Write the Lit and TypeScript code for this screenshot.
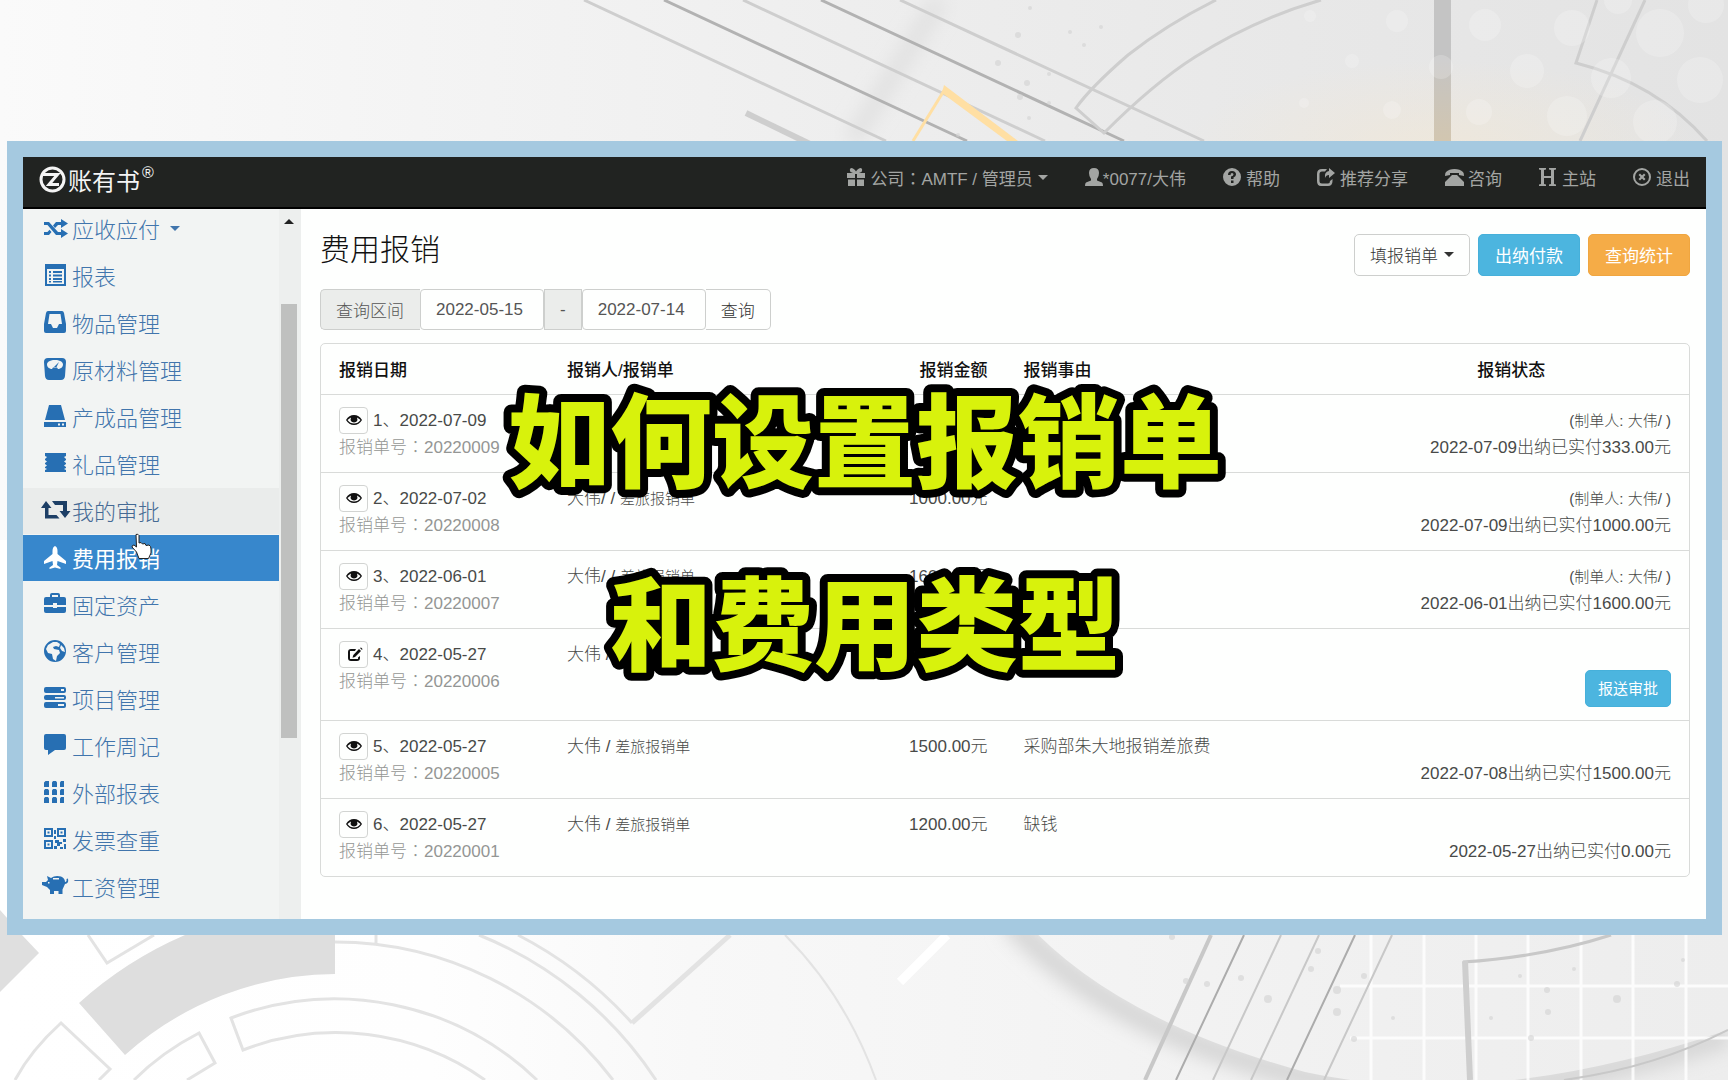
import { LitElement, html, css, svg, nothing } from "lit";
import { customElement, property } from "lit/decorators.js";
import { classMap } from "lit/directives/class-map.js";

const icons: Record<string, unknown> = {
  random: svg`<path d="M0 5h5l9 10h3v-3l7 4.500-7 4.500v-3h-5L3.500 8H0zM0 18h5l2.500-3-2-2.200L3.500 15H0zM9 8.500 12 5h5V2l7 4.500L17 11V8h-3l-3 3z"/>`,
  listalt: svg`<path fill-rule="evenodd" d="M1 0h21v22H1zm2 5v15h17V5z"/><path d="M5 7h2v2H5zm4 0h9v2H9zM5 10.500h2v2H5zm4 0h9v2H9zM5 14h2v2H5zm4 0h9v2H9zM5 17h2v1.500H5zm4 0h9v1.500H9z"/>`,
  inbox: svg`<path fill-rule="evenodd" d="M4 0h14q1.500 0 2 2l2 11v7q0 2-2 2H2q-2 0-2-2v-7L2 2q.5-2 2-2zm1.500 3L4 13h3l2 4h4l2-4h3l-1.500-10z"/>`,
  scale: svg`<path fill-rule="evenodd" d="M4 0h14q4 0 4 4l-1 14q-.5 4-4 4H5q-3.500 0-4-4L0 4q0-4 4-4zm7 2C5 2 3 4.500 3 6.500c0 3 3 4.500 5 4.500l1-1.500h4l1 1.500c2 0 5-1.500 5-4.500C19 4.500 17 2 11 2z"/><path d="m10 9 5-5-2.500 5z"/>`,
  hdd: svg`<path d="M5 0h12l4 15H1zM0 17h22v5H0z"/><path d="M14 18.500h2v2h-2zm4 0h2v2h-2z" fill="#f2f4f3"/>`,
  film: svg`<path d="M1 1h21v3l-2 1 2 2v1l-2 1.500 2 1.500v1l-2 1.500 2 1.500v1l-2 1 2 1v2H1v-2l2-1-2-1v-1l2-1.500L1 12v-1l2-1.500L1 8V7l2-2-2-1z"/>`,
  retweet: svg`<path d="m2 2 5.500 7h-3v7h8l3 3.500H1V9h-4zM8 2h15v10h3.500L21 19l-5.500-7H19V6h-8z"/>`,
  plane: svg`<path d="M11 0q2.500 1 2.500 5v3l8.500 7v3l-8.500-3-.5 4 3.500 2.500V23L11 21.500 5.500 23v-1.500L9 19l-.5-4L0 18v-3l8.500-7V5Q8.500 1 11 0z"/>`,
  briefcase: svg`<path fill-rule="evenodd" d="M8 0h6q2 0 2 2v2h4q2 0 2 2v6H13v-2H9v2H0V6q0-2 2-2h4V2q0-2 2-2zm0 2v2h6V2zM0 14h9v1h4v-1h9v4q0 2-2 2H2q-2 0-2-2z"/>`,
  globe: svg`<path fill-rule="evenodd" d="M11 0a11 11 0 1 1 0 22 11 11 0 0 1 0-22zM9 2 4 5 2 9l2 4 4 1 1 5 3 2 1-5 3-3-1-3-5-1-1-2 3-1 3 1 1-3-3-2zm8 3-1 3 2 3 3 1-1-4z"/>`,
  tasks: svg`<path fill-rule="evenodd" d="M2 0h18q2 0 2 2v2q0 2-2 2H2Q0 6 0 4V2q0-2 2-2zm15 2v2h3V2zM2 8h18q2 0 2 2v1q0 2-2 2H2q-2 0-2-2v-1q0-2 2-2zm9 2v1.500h9V10zM2 15h18q2 0 2 2v2q0 2-2 2H2q-2 0-2-2v-2q0-2 2-2zm12 2v2h6v-2z"/>`,
  comment: svg`<path d="M2 0h18q2 0 2 2v12q0 2-2 2h-9l-7 5v-5H2q-2 0-2-2V2q0-2 2-2z"/>`,
  th: svg`<path d="M1.500 0H5v6H0V1.500zM9 0h3l1 1.500V6H8V1.500zm8 0h3v6h-4V1.500zM1 8h3l1 1.500V14H0V9.500zm8 0h3l1 1.500V14H8V9.500zm8 0h3v6h-4V9.500zM1 16h3l1 1.500V22H0v-4.500zm8 0h3l1 1.500V22H8v-4.500zm8 0h3v6h-4v-4.500z"/>`,
  qrcode: svg`<path fill-rule="evenodd" d="M0 0h9v9H0zm2 2v5h5V2zM0 12h9v9H0zm2 2v5h5v-5zM13 0h9v9h-9zm2 2v5h5V2z"/><path d="M3.500 3.500h2v2h-2zm0 12h2v2h-2zm13-12h2v2h-2zM10 2h2v4h-2zm0 6h2v3h-2zm1 4h4v2h3v2h-2v2h-3v-3h-2zm8-1h3v3h-3zm-9 7h3v3h-3zm6 1h3v2h-3zm4-3h2v5h-2z"/>`,
  piggy: svg`<path fill-rule="evenodd" d="m3 1 4 2q4-3 10-1.500Q21 3 21 7q2 0 1.500-3l1.500-.5q1 5-3 5.500l-2.500 5.500V19h-4v-3H10v3H6v-4l-3-3-5-2V7h4l2-2zm6 2v1.500h6V3zM4 7v1.500h1.500V7z"/>`,
  gift: svg`<path fill-rule="evenodd" d="M0 5h6L3.500 4Q2 1 4 0q3 0 5 3.500Q11 0 14 0q2 1 .5 4L12 5h6v5h-8V6H8v4H0zm1 6.500h7V18H1zm9 0h7V18h-7z"/>`,
  user: svg`<path d="M9 0q5 0 5 5 0 3.500-2 6v1.500l5 2q1 .5 1 3.500H0q0-3 1-3.500l5-2V11Q4 8.500 4 5q0-5 5-5z"/>`,
  help: svg`<path fill-rule="evenodd" d="M9 0a9 9 0 1 1 0 18A9 9 0 0 1 9 0zM5 7h2.500q0-2 1.500-2t1.500 1.500-2.500 2V11h2.500V9.500Q13 8.500 13 6.500 13 3 9 3T5 7zm3 5.500V15h2.500v-2.500z"/>`,
  share: svg`<path d="M10 1H5Q0 1 0 6v7q0 5 4 5h7q4.500 0 4.500-5v-2L13 13q0 2.500-2 2.500H5q-2.500 0-2.500-2.500V6q0-2.500 2.500-2.500h3z"/><path d="m12 0 6 5-6 5V7q-3 0-4 3-1-6 4-7z"/>`,
  phone: svg`<path fill-rule="evenodd" d="M9.500 1Q15 1 18 4q1 1 1 4l-5-1V5H5v2L0 8q0-3 1-4 3-3 8.500-3zM7 7h5l7 7v4H0v-4z"/>`,
  h: svg`<path d="M0 0h7v1.500l-2 .5v6h7V2l-2-.5V0h7v1.500L15 2v14l2 .5V18h-7v-1.500l2-.5v-6H5v6l2 .5V18H0v-1.500L2 16V2L0 1.500z"/>`,
  close: svg`<path fill-rule="evenodd" d="M9 0a9 9 0 1 1 0 18A9 9 0 0 1 9 0zm0 2a7 7 0 1 0 0 14A7 7 0 0 0 9 2z"/><path d="m5.500 7 1.500-1.500 2 2 2-2L12.500 7l-2 2 2 2-1.500 1.500-2-2-2 2L5.500 11l2-2z"/>`,
  eye: svg`<path fill-rule="evenodd" d="M8 2q5 0 8 5-3 5-8 5T0 7q3-5 8-5zm-3 2.500Q3 5.500 1.500 7 4 10.500 8 10.500T14.500 7Q13 5.500 11 4.500 12.500 9 8 9.500 3.500 9 5 4.500z"/><circle cx="8" cy="6" r="3"/>`,
  edit: svg`<path d="M9 1H4Q1 1 1 4v6q0 3 3 3h6q3 0 3-3V8l-2 1.500V11H3V3h5zm3 0 2 2-6 6-2.500.8L6.300 7z"/><path d="m13 0 1-.5 1.500 1.500-.5 1z"/>`,
};

const icon = (name: string, size: number) =>
  html`<svg class="icon" width=${size} height=${size} viewBox="0 0 ${size} ${size}" aria-hidden="true">${icons[name]}</svg>`;

const colon = html`<span class="colon">：</span>`;

interface Claim {
  n: number;
  date: string;
  no: string;
  person: string;
  amount: string;
  reason?: string;
  maker?: boolean;
  paid?: string;
}

const claims: Claim[] = [
  { n: 1, date: "2022-07-09", no: "20220009", person: "大伟/ / ", amount: "333.00元", maker: true, paid: "2022-07-09出纳已实付333.00元" },
  { n: 2, date: "2022-07-02", no: "20220008", person: "大伟/ / ", amount: "1000.00元", maker: true, paid: "2022-07-09出纳已实付1000.00元" },
  { n: 3, date: "2022-06-01", no: "20220007", person: "大伟/ / ", amount: "1600.00元", maker: true, paid: "2022-06-01出纳已实付1600.00元" },
  { n: 4, date: "2022-05-27", no: "20220006", person: "大伟 / ", amount: "3000.00元" },
  { n: 5, date: "2022-05-27", no: "20220005", person: "大伟 / ", amount: "1500.00元", reason: "采购部朱大地报销差旅费", paid: "2022-07-08出纳已实付1500.00元" },
  { n: 6, date: "2022-05-27", no: "20220001", person: "大伟 / ", amount: "1200.00元", reason: "缺钱", paid: "2022-05-27出纳已实付0.00元" },
];

const menu: [string, string][] = [
  ["random", "应收应付"],
  ["listalt", "报表"],
  ["inbox", "物品管理"],
  ["scale", "原材料管理"],
  ["hdd", "产成品管理"],
  ["film", "礼品管理"],
  ["retweet", "我的审批"],
  ["plane", "费用报销"],
  ["briefcase", "固定资产"],
  ["globe", "客户管理"],
  ["tasks", "项目管理"],
  ["comment", "工作周记"],
  ["th", "外部报表"],
  ["qrcode", "发票查重"],
  ["piggy", "工资管理"],
];

const shared = css`
  :host {
    display: block;
    font-family: "Liberation Sans", "Noto Sans CJK SC", sans-serif;
    font-size: 17px;
    font-weight: 300;
  }
  * {
    box-sizing: border-box;
  }
  button,
  input {
    font: inherit;
    margin: 0;
  }
  a {
    color: inherit;
    text-decoration: none;
  }
  .icon {
    flex: none;
    fill: currentColor;
    overflow: visible;
  }
  .colon {
    font-family: "Noto Sans CJK TC", sans-serif;
    line-height: 0;
  }
  .caret {
    flex: none;
    border: 5px solid transparent;
    border-top-color: currentColor;
    border-bottom: 0;
  }
`;

@customElement("tech-backdrop")
class TechBackdrop extends LitElement {
  static styles = css`
    :host {
      display: block;
      position: absolute;
      inset: 0;
    }
    .art {
      display: block;
      width: 100%;
      height: 100%;
      fill: none;
    }
  `;
  render() {
    const bubbles = [
      [1397, 21, 11], [1485, 25, 16], [1527, 71, 17], [1572, 28, 18], [1660, 33, 24], [1611, 78, 20], [1700, 80, 23],
      [1567, 116, 20], [1655, 122, 22], [1479, 112, 13], [1392, 110, 9], [1352, 61, 7], [1706, 5, 18], [1618, 0, 14],
      [1441, 67, 12], [1304, 103, 5], [1310, 16, 6],
    ];
    const specks = [
      [1172, 937, 3], [1186, 981, 3], [1207, 984, 3], [1241, 978, 3], [1268, 999, 4], [1318, 951, 3], [1311, 969, 3],
      [1337, 990, 4], [1337, 1012, 4], [1364, 976, 3], [1354, 1039, 3], [1531, 1038, 3], [1547, 990, 3], [1548, 1012, 3],
      [1617, 999, 4], [1520, 976, 2], [1574, 969, 2], [1677, 984, 3], [1683, 960, 2], [1393, 1018, 2], [1491, 1018, 2],
      [998, 63, 3], [1018, 35, 3], [1020, 97, 3], [1027, 83, 3], [1049, 74, 2], [1070, 32, 2], [1084, 45, 2],
      [1101, 27, 2], [1029, 118, 2], [1049, 103, 2], [958, 135, 2], [1030, 8, 2],
    ];
    return html`<svg class="art" viewBox="0 0 1728 1080" preserveAspectRatio="xMidYMid slice" aria-hidden="true">
      <defs>
        <linearGradient id="top" x1="0" y1="0" x2="1" y2="0">
          <stop offset="0" stop-color="#fafafa" />
          <stop offset=".2" stop-color="#f5f5f5" />
          <stop offset=".45" stop-color="#efefef" />
          <stop offset=".7" stop-color="#e9e9e9" />
          <stop offset="1" stop-color="#e3e3e3" />
        </linearGradient>
        <linearGradient id="low" x1="0" y1="0" x2="1" y2="0">
          <stop offset="0" stop-color="#fff" />
          <stop offset=".25" stop-color="#fefefe" />
          <stop offset=".4" stop-color="#f8f8f8" />
          <stop offset=".8" stop-color="#f0f0f0" />
          <stop offset="1" stop-color="#ededed" />
        </linearGradient>
        <linearGradient id="bar" x1="0" y1="0" x2="0" y2="1">
          <stop offset=".4" stop-color="#c4c4c4" />
          <stop offset="1" stop-color="#d2c6b0" />
        </linearGradient>
        <radialGradient id="glow">
          <stop offset="0" stop-color="#f3e8d4" stop-opacity=".6" />
          <stop offset="1" stop-color="#f3e8d4" stop-opacity="0" />
        </radialGradient>
        <filter id="soft" x="-20%" y="-20%" width="140%" height="140%"><feGaussianBlur stdDeviation="9" /></filter>
        <clipPath id="outside"><path d="M864 920h160q90 100 281 152 180 40 423-42v50H864z" /></clipPath>
      </defs>
      <rect width="1728" height="540" fill="url(#top)" />
      <rect y="540" width="1728" height="540" fill="url(#low)" />
      <path d="M940 0 852 141" stroke="#e0e0e0" stroke-width="16" filter="url(#soft)" />
      <ellipse cx="1440" cy="150" rx="260" ry="90" fill="url(#glow)" />
      <g stroke="#cecece" stroke-width="3">
        <path d="m584 0 302 141M743 0l302 141M900 0l304 141" />
        <path d="m664 0 303 141M821 0l303 141" stroke="#b2b2b2" />
        <path d="m746 113 64 31" stroke-width="6" />
        <path d="M1216 0q-50 25-88 55-38 33-52 53l28 25q50-50 91-76 60-38 126-57M1597 0l-21 63q80 20 131 78M1645 0l-65 141" />
      </g>
      <path d="m913 141 32-52" stroke="#ffdfa3" stroke-width="3" />
      <path d="m944 85 74 56h-11l-65-48z" fill="#ffdfa3" />
      <rect x="1434" width="17" height="141" fill="url(#bar)" />
      <g fill="#fff" fill-opacity=".2">${bubbles.map(([x, y, r]) => svg`<circle cx=${x} cy=${y} r=${r} />`)}</g>

      <path d="M0 910 22 935l17 18L0 992z" fill="#dfdfdf" />
      <path d="M185 935h150v39a317 317 0 0 0-210 81l-46-52a385 385 0 0 1 106-68z" fill="#dedede" />
      <g stroke="#e3e3e3" stroke-width="3">
        <path d="m88 935 19 28 47-28M15 1080q16-30 46-57l49 46-11 11M134 1080q28-28 65-47l16 30-28 17" />
        <path d="M537 1080a292 292 0 0 0-306-62l12 32a258 258 0 0 1 242 30M335 942a349 349 0 0 1 278 138M376 935v8" />
        <path d="M479 935a384 384 0 0 1 177 145M518 935a400 400 0 0 1 114 88" />
        <path d="m632 1023 98-88" stroke-width="5" />
        <path d="M785 935q60 60 91 145" stroke-width="2" />
      </g>
      <path d="m947 935-47 47" stroke="#fff" stroke-width="9" />
      <g clip-path="url(#outside)">
        <path d="M1010 920q100 110 295 157 180 40 423-42" stroke="#d6d6d6" stroke-width="24" filter="url(#soft)" />
      </g>
      <g stroke="#fff" stroke-opacity=".8" stroke-width="3">
        <path d="M1371 935v145M1424 935v145M1476 935v145M1528 935v145M1581 935v145M1633 935v145M1686 935v145M1340 986h388M1350 1038h378" />
      </g>
      <g stroke="#c8c8c8" stroke-width="2">
        <path d="m1211 935-66 145" stroke-width="4" />
        <path d="m1281 935-68 145M1319 935l-68 145M1392 935l-68 145" />
        <path d="m1244 935-68 145M1355 935l-68 145" stroke="#acacac" />
        <path d="M1463 962q80-5 148-27" stroke-width="3" />
        <path d="m1465 961 5 119" stroke="#cecece" stroke-width="6" />
        <path d="M1564 1080q90-12 164-50" />
      </g>
      <g fill="#d2d2d2" fill-opacity=".6">${specks.map(([x, y, r]) => svg`<circle cx=${x} cy=${y} r=${r} />`)}</g>
    </svg>`;
  }
}

@customElement("top-bar")
class TopBar extends LitElement {
  static styles = [
    shared,
    css`
      .bar {
        display: flex;
        justify-content: space-between;
        align-items: flex-start;
        height: 52px;
        padding: 0 16px;
        background: #212321;
        border-bottom: 2px solid #000;
        color: #a3a5a3;
      }
      .brand {
        display: flex;
        align-items: center;
        gap: 2px;
        height: 44px;
        color: #f4f4f4;
        font-size: 24px;
        font-weight: 400;
      }
      .logo {
        width: 27px;
        height: 27px;
        fill: none;
        stroke: currentColor;
      }
      .reg {
        align-self: flex-start;
        font-size: 16px;
        line-height: 32px;
      }
      .links {
        display: flex;
        gap: 37px;
        height: 40px;
        align-items: center;
        font-weight: 400;
      }
      .link {
        display: flex;
        align-items: center;
        gap: 5px;
        white-space: nowrap;
      }
      .link.tight {
        gap: 0;
      }
    `,
  ];
  render() {
    return html`<header class="bar">
      <a class="brand" href="#home">
        <svg class="logo" viewBox="0 0 27 27" aria-hidden="true">
          <circle cx="13.500" cy="13.500" r="11.500" stroke-width="3" />
          <path d="M4 8.500h14.500L10 18.500h10" stroke-width="3" />
        </svg>
        <span>账有书</span><span class="reg">®</span>
      </a>
      <nav class="links">
        <a class="link" href="#company">${icon("gift", 18)}<span>公司${colon}AMTF / 管理员</span><span class="caret"></span></a>
        <a class="link tight" href="#user">${icon("user", 18)}*0077/大伟</a>
        <a class="link" href="#help">${icon("help", 18)}帮助</a>
        <a class="link" href="#share">${icon("share", 18)}推荐分享</a>
        <a class="link" href="#ask">${icon("phone", 18)}咨询</a>
        <a class="link" href="#main">${icon("h", 18)}主站</a>
        <a class="link" href="#exit">${icon("close", 18)}退出</a>
      </nav>
    </header>`;
  }
}

@customElement("side-menu")
class SideMenu extends LitElement {
  @property() current = "费用报销";
  @property() hovered = "我的审批";
  static styles = [
    shared,
    css`
      :host {
        display: flex;
        background: #f2f4f3;
      }
      .nav {
        width: 256px;
        overflow: hidden;
        padding-bottom: 8px;
      }
      .list {
        list-style: none;
        margin: -3px 0 0;
        padding: 0;
      }
      .item {
        position: relative;
        margin-bottom: 1px;
      }
      .entry {
        display: flex;
        align-items: center;
        gap: 6px;
        height: 46px;
        padding: 0 0 2px 21px;
        color: #4175ac;
        font-size: 22px;
      }
      .entry .icon {
        color: #276fb3;
        width: 22px;
        height: 22px;
      }
      .entry .caret {
        margin-left: 4px;
      }
      .entry.hover {
        background: #eaeceb;
        color: #456a94;
      }
      .entry.hover .icon {
        color: #1d3f66;
      }
      .entry.active {
        background: #3787cc;
        font-weight: 400;
      }
      .entry.active,
      .entry.active .icon {
        color: #fff;
      }
      .hand {
        position: absolute;
        left: 108px;
        top: -2px;
        fill: #fff;
        stroke: #222;
      }
      .track {
        width: 22px;
        padding: 10px 4px 0 2px;
        background: #edefee;
        display: flex;
        flex-direction: column;
      }
      .up {
        align-self: center;
        border: 5px solid transparent;
        border-top: 0;
        border-bottom-color: #222;
      }
      .thumb {
        height: 62%;
        margin-top: 80px;
        background: #bfc0bf;
      }
    `,
  ];
  render() {
    return html`<nav class="nav">
        <ul class="list">
          ${menu.map(
            ([glyph, label], i) => html`<li class="item">
              <a class=${classMap({ entry: true, active: label === this.current, hover: label === this.hovered })} href="#m${i}">
                ${icon(glyph, 22)}<span>${label}</span>${i === 0 ? html`<span class="caret"></span>` : nothing}
              </a>
              ${label === this.current
                ? html`<svg class="hand" width="22" height="30" viewBox="0 0 22 30" aria-hidden="true">
                    <path d="M5 1.500q2-1 3 1V10l2-.5 1.500 1.500 2.500-.5 1 2 3-.5q2 1 2 4v4l-2.500 5.500H8L5.500 19 1 14q0-2 2-2l2.500 2z" />
                  </svg>`
                : nothing}
            </li>`,
          )}
        </ul>
      </nav>
      <div class="track"><span class="up"></span><span class="thumb"></span></div>`;
  }
}

@customElement("claims-page")
class ClaimsPage extends LitElement {
  static styles = [
    shared,
    css`
      .page {
        padding: 25px 16px 42px 19px;
        color: #484a48;
      }
      .head {
        display: flex;
        justify-content: space-between;
        align-items: flex-start;
      }
      .title {
        margin: 0;
        font-size: 30px;
        font-weight: 300;
        line-height: 32px;
        color: #111;
      }
      .actions {
        display: flex;
        gap: 8px;
      }
      .btn {
        display: flex;
        align-items: center;
        justify-content: center;
        gap: 6px;
        height: 42px;
        padding: 0 15px 2px;
        border: 1px solid #cdcfcd;
        border-radius: 5px;
        background: #fefffe;
        color: #333;
      }
      .btn.info,
      .btn.warn {
        padding: 0 16px 2px;
        color: #fff;
        font-weight: 400;
      }
      .btn.info {
        background: #4cb5df;
        border-color: #46b0da;
      }
      .btn.warn {
        background: #f5ac47;
        border-color: #f0a640;
      }
      .btn.small {
        height: 37px;
        padding: 0 12px;
        margin: 2px 0 2px auto;
        font-size: 15px;
      }
      .search {
        display: flex;
        height: 41px;
        margin-top: 13px;
      }
      .part {
        display: flex;
        align-items: center;
        justify-content: center;
        padding: 0 15px;
        border: 1px solid #cdcfcd;
        background: #ebedeb;
        color: #555;
      }
      .part.first {
        padding: 0 16px 0 15px;
        border-radius: 5px 0 0 5px;
        border-right: 0;
      }
      .part.date {
        width: 124px;
        background: #fefffe;
        border-radius: 4px;
      }
      .part.go {
        background: #fefffe;
        border-radius: 0 5px 5px 0;
        border-left: 0;
        color: #333;
      }
      .panel {
        margin-top: 13px;
        border: 1px solid #d9dbd9;
        border-radius: 5px;
      }
      .table {
        width: 100%;
        table-layout: fixed;
        border-collapse: separate;
        border-spacing: 0;
      }
      .c1 { width: 228px; }
      .c2 { width: 17%; }
      .c3 { width: 224px; }
      .c5 { width: 26%; }
      th {
        height: 50px;
        padding: 0 18px 2px;
        text-align: left;
        font-weight: 500;
        color: #111;
      }
      td {
        padding: 12px 18px 11px;
        line-height: 27px;
        vertical-align: top;
        border-top: 1px solid #d9dbd9;
        white-space: nowrap;
      }
      th.num,
      td.num {
        text-align: right;
      }
      th.state {
        text-align: center;
      }
      .line {
        display: flex;
        align-items: center;
        gap: 5px;
        height: 27px;
      }
      .view {
        display: flex;
        align-items: center;
        justify-content: center;
        width: 29px;
        height: 27px;
        padding: 0;
        border: 1px solid #d2d4d2;
        border-radius: 4px;
        background: #fefffe;
        color: #111;
      }
      .muted {
        height: 27px;
        color: #949694;
      }
      .fine {
        font-size: 15px;
      }
      .status {
        height: 27px;
      }
    `,
  ];
  render() {
    return html`<main class="page">
      <div class="head">
        <h1 class="title">费用报销</h1>
        <div class="actions">
          <button class="btn">填报销单<span class="caret"></span></button>
          <button class="btn info">出纳付款</button>
          <button class="btn warn">查询统计</button>
        </div>
      </div>
      <form class="search" @submit=${(e: Event) => e.preventDefault()}>
        <label class="part first" for="from">查询区间</label>
        <input class="part date" id="from" value="2022-05-15" />
        <label class="part" for="to">-</label>
        <input class="part date" id="to" value="2022-07-14" />
        <button class="part go">查询</button>
      </form>
      <div class="panel">
        <table class="table">
          <colgroup>
            <col class="c1" /><col class="c2" /><col class="c3" /><col /><col class="c5" />
          </colgroup>
          <thead>
            <tr>
              <th>报销日期</th>
              <th>报销人/报销单</th>
              <th class="num">报销金额</th>
              <th>报销事由</th>
              <th class="state">报销状态</th>
            </tr>
          </thead>
          <tbody>
            ${claims.map(
              (c) => html`<tr>
                <td>
                  <div class="line">
                    <button class="view" aria-label=${c.paid ? "查看" : "编辑"}>${c.paid ? icon("eye", 16) : icon("edit", 14)}</button>
                    <span>${c.n}、${c.date}</span>
                  </div>
                  <div class="muted">报销单号${colon}${c.no}</div>
                </td>
                <td>${c.person}<span class="fine">差旅报销单</span></td>
                <td class="num">${c.amount}</td>
                <td>${c.reason ?? nothing}</td>
                <td class="num">
                  <div class="status fine">${c.maker ? "(制单人: 大伟/ )" : nothing}</div>
                  ${c.paid ? html`<div>${c.paid}</div>` : html`<button class="btn info small">报送审批</button>`}
                </td>
              </tr>`,
            )}
          </tbody>
        </table>
      </div>
    </main>`;
  }
}

@customElement("app-root")
class AppRoot extends LitElement {
  static styles = [
    shared,
    css`
      .stage {
        position: relative;
        min-height: 100vh;
        padding: 141px 6px 0 7px;
        overflow: hidden;
      }
      .frame {
        position: relative;
        border: 16px solid #a5c9e0;
        background: #fefffe;
      }
      .body {
        display: flex;
      }
      .content {
        flex: 1;
        min-width: 0;
      }
      .overlay {
        position: absolute;
        inset: 0;
        display: flex;
        align-items: center;
        justify-content: center;
        pointer-events: none;
      }
      .caption {
        width: 760px;
        height: 360px;
        overflow: visible;
        font-family: "Noto Sans CJK SC", sans-serif;
        font-size: 102px;
        font-weight: 900;
        text-anchor: middle;
        fill: #d8f20c;
        stroke: #000;
        stroke-width: 16px;
        stroke-linejoin: round;
        paint-order: stroke fill;
      }
    `,
  ];
  render() {
    return html`<div class="stage">
      <tech-backdrop></tech-backdrop>
      <div class="frame">
        <top-bar></top-bar>
        <div class="body">
          <side-menu></side-menu>
          <claims-page class="content"></claims-page>
        </div>
        <div class="overlay">
          <svg class="caption" viewBox="0 0 760 360">
            <text x="380" y="122">如何设置报销单</text>
            <text x="380" y="305">和费用类型</text>
          </svg>
        </div>
      </div>
    </div>`;
  }
}
